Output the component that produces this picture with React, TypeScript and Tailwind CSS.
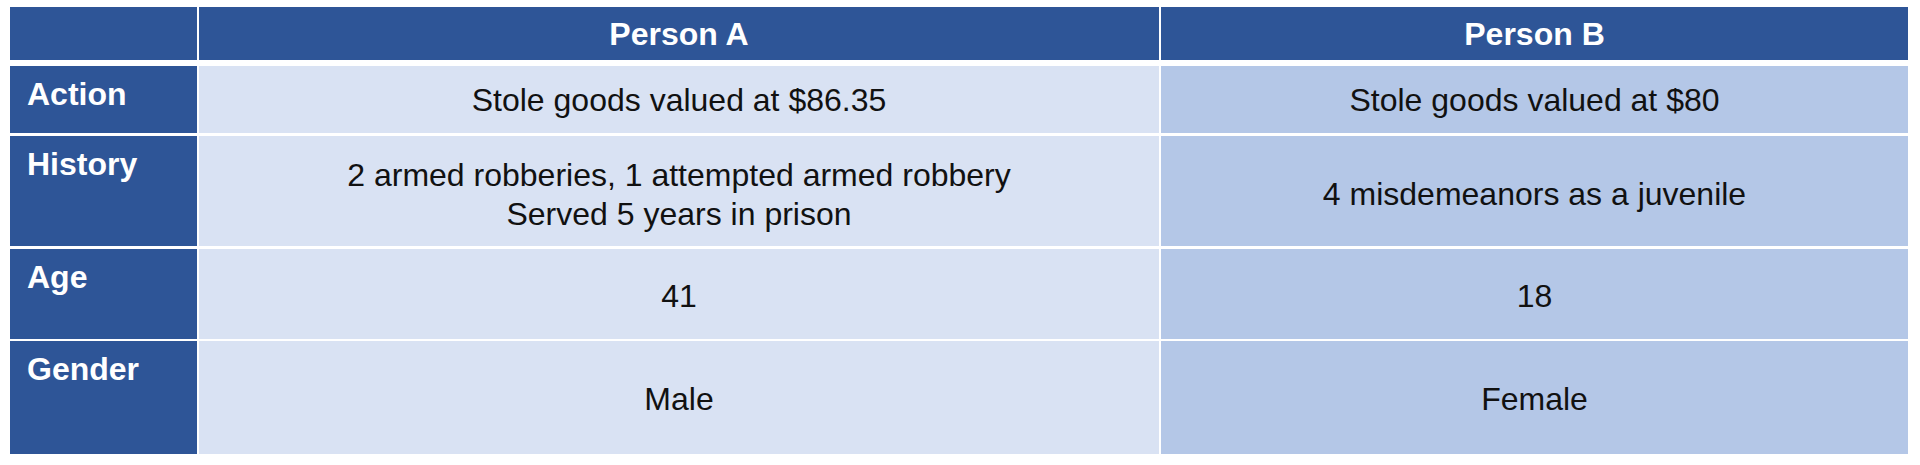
import React from "react";

const rows: { label: string; a: string[]; b: string[]; h: string; mb: string; pt: string }[] = [
  { label: "Action", a: ["Stole goods valued at $86.35"], b: ["Stole goods valued at $80"], h: "h-[67px]", mb: "mb-[3px]", pt: "pt-[2px]" },
  { label: "History", a: ["2 armed robberies, 1 attempted armed robbery", "Served 5 years in prison"], b: ["4 misdemeanors as a juvenile"], h: "h-[110px]", mb: "mb-[3px]", pt: "pt-[7px]" },
  { label: "Age", a: ["41"], b: ["18"], h: "h-[90px]", mb: "mb-[2px]", pt: "pt-[4px]" },
  { label: "Gender", a: ["Male"], b: ["Female"], h: "h-[113px]", mb: "mb-0", pt: "pt-[3px]" },
];

export default function App() {
  return (
    <div className="w-[1920px] h-[465px] bg-white pt-[7px] pl-[10px] font-['Liberation_Sans',Arial,sans-serif] text-[32px]">
      <div className="w-[1898px] flex flex-col">
        <div className="flex h-[53px] mb-[6px] gap-x-[2px]">
          <div className="w-[187px] bg-[#2e5597]" />
          <div className="w-[960px] bg-[#2e5597] flex items-center justify-center text-white font-bold">Person A</div>
          <div className="w-[747px] bg-[#2e5597] flex items-center justify-center text-white font-bold">Person B</div>
        </div>
        {rows.map((r) => (
          <div key={r.label} className={`flex gap-x-[2px] ${r.h} ${r.mb}`}>
            <div className="w-[187px] bg-[#2e5597] text-white font-bold pl-[17px] pt-[9px] leading-[38px]">{r.label}</div>
            <div className={`w-[960px] bg-[#d9e2f3] flex flex-col items-center justify-center text-[#111] leading-[39px] ${r.pt}`}>
              {r.a.map((t) => (
                <div key={t}>{t}</div>
              ))}
            </div>
            <div className={`w-[747px] bg-[#b4c7e7] flex flex-col items-center justify-center text-[#111] leading-[39px] ${r.pt}`}>
              {r.b.map((t) => (
                <div key={t}>{t}</div>
              ))}
            </div>
          </div>
        ))}
      </div>
    </div>
  );
}
